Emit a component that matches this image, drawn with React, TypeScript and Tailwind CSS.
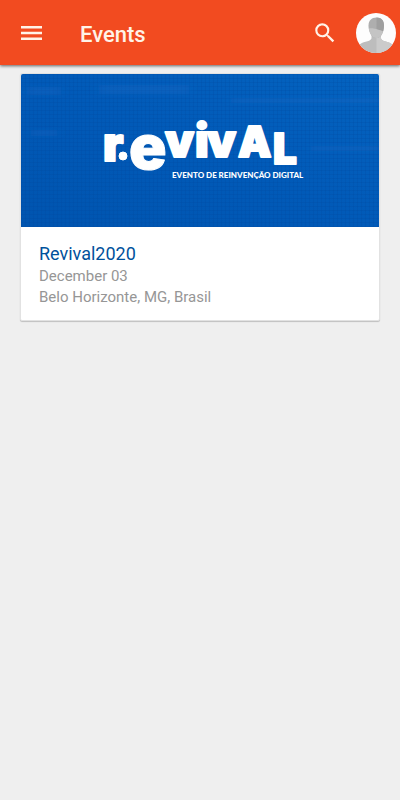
function MenuIcon() {
  return (
    <svg viewBox="0 0 22 16" className="h-4 w-[22px]" fill="currentColor" aria-hidden="true">
      <path d="M1 1h21v2.4H1zM1 6.8h21v2.4H1zM1 12.600h21V15H1z" />
    </svg>
  );
}

function SearchIcon() {
  return (
    <svg viewBox="0 0 24 24" className="size-[26px]" fill="currentColor" aria-hidden="true">
      <path d="M15.5 14h-.79l-.28-.27A6.47 6.47 0 0 0 16 9.5 6.5 6.5 0 1 0 9.5 16c1.61 0 3.09-.59 4.23-1.57l.27.28v.79l5 4.99L20.49 19l-4.99-5zm-6 0C7.01 14 5 11.99 5 9.5S7.01 5 9.5 5 14 7.01 14 9.5 11.99 14 9.5 14z" />
    </svg>
  );
}

function Avatar() {
  return (
    <svg viewBox="0 0 40 40" className="size-10" aria-hidden="true">
      <defs>
        <clipPath id="avatar-clip">
          <circle cx="20" cy="20" r="20" />
        </clipPath>
      </defs>
      <g clipPath="url(#avatar-clip)">
        <rect width="40" height="40" fill="#fdfdfd" />
        <path d="M15.500 20h9.500v5.500c2 4 9 2.500 12 7V40H3v-7.500c3-4.500 10.500-3 12.500-7z" fill="#bdbdbd" />
        <path d="M20.500 20H25v5.500c2 4 9 2.500 12 7V40H20.500z" fill="#cbcbcb" />
        <path d="M20.500 4.500c-5 0-8 3-8 8 0 6 3 12.500 8 12.500s7.500-6.500 7.500-12.500c0-5-2.500-8-7.500-8z" fill="#aeaeae" />
        <path d="M20.500 4.500c5 0 7.500 3 7.500 8 0 2-.3 4-1 6-2-1-3.500-1.500-6.500-2z" fill="#9f9f9f" />
        <path d="M12.800 15.500c4-.5 7 0 14.200 3-1.200 3.800-3.300 6.500-6.500 6.500-4.300 0-7-4.500-7.700-9.500z" fill="#c4c4c4" />
      </g>
    </svg>
  );
}

function Banner() {
  return (
    <svg viewBox="0 0 358 153" className="block w-full rounded-t-xs" role="img" aria-label="Revival, evento de reinvenção digital">
      <defs>
        <linearGradient id="banner-fill" x1="0" y1="1" x2="1" y2="0">
          <stop offset="0" stopColor="#0054af" />
          <stop offset="0.5" stopColor="#015ab8" />
          <stop offset="1" stopColor="#0463c0" />
        </linearGradient>
        <pattern id="banner-grid" width="4" height="4" patternUnits="userSpaceOnUse">
          <path d="M0 .5h4M.5 0v4" stroke="#00489c" strokeOpacity="0.2" />
        </pattern>
        <filter id="banner-soft" x="-20%" y="-100%" width="140%" height="300%">
          <feGaussianBlur stdDeviation="6 2" />
        </filter>
      </defs>
      <rect width="358" height="153" fill="url(#banner-fill)" />
      <rect width="358" height="153" fill="url(#banner-grid)" />
      <g fill="#1671c8" fillOpacity="0.25" filter="url(#banner-soft)">
        <rect x="6" y="13" width="34" height="8" />
        <rect x="78" y="11" width="90" height="9" />
        <rect x="10" y="56" width="26" height="6" />
        <rect x="290" y="72" width="68" height="5" />
        <rect x="210" y="24" width="148" height="5" />
      </g>
      <g fill="#fff" stroke="#fff" strokeLinejoin="round" className="font-['Inter','Liberation_Sans',sans-serif] font-black">
        <text strokeWidth="2">
          <tspan x="82" y="87" fontSize="47">r</tspan>
          <tspan x="108" y="95" fontSize="62" strokeWidth="1">e</tspan>
          <tspan x="144" y="83" fontSize="46">v</tspan>
          <tspan x="174" y="83" fontSize="46">i</tspan>
          <tspan x="186" y="83" fontSize="46">v</tspan>
          <tspan x="217" y="83" fontSize="42">A</tspan>
          <tspan x="252" y="90" fontSize="42">L</tspan>
        </text>
        <circle cx="102" cy="82" r="4" />
      </g>
      <text
        x="151"
        y="104"
        fontSize="8"
        fill="#fff"
        className="font-['Lato','Liberation_Sans',sans-serif] font-black"
      >
        EVENTO DE REINVENÇÃO DIGITAL
      </text>
    </svg>
  );
}

export default function App() {
  return (
    <div className="min-h-screen bg-[#efefef] font-['Roboto','Liberation_Sans',sans-serif]">
      <header className="flex h-[65px] items-center bg-[#f24b20] pr-1 pl-5 text-[#fff3e8] shadow-[0_1px_3px_rgba(0,0,0,0.6)]">
        <button type="button" aria-label="Menu" className="flex h-10 w-15 items-center">
          <MenuIcon />
        </button>
        <h1 className="flex-1 pt-1 text-[22px] leading-7 font-medium">Events</h1>
        <button type="button" aria-label="Search" className="mr-[18px] flex h-10 items-center">
          <SearchIcon />
        </button>
        <button type="button" aria-label="Profile">
          <Avatar />
        </button>
      </header>
      <main className="px-5 pt-2">
        <article className="rounded-xs border border-[#e2e2e2] bg-white shadow-[0_1px_1px_rgba(0,0,0,0.2)]">
          <Banner />
          <div className="px-[18px] pt-[15px] pb-3">
            <h2 className="text-lg leading-6">
              <a href="#revival2020" className="text-[#00519c]">Revival2020</a>
            </h2>
            <p className="text-[15px] leading-[21px] text-[#969696]">December 03</p>
            <p className="text-[15px] leading-[21px] text-[#969696]">Belo Horizonte, MG, Brasil</p>
          </div>
        </article>
      </main>
    </div>
  );
}
